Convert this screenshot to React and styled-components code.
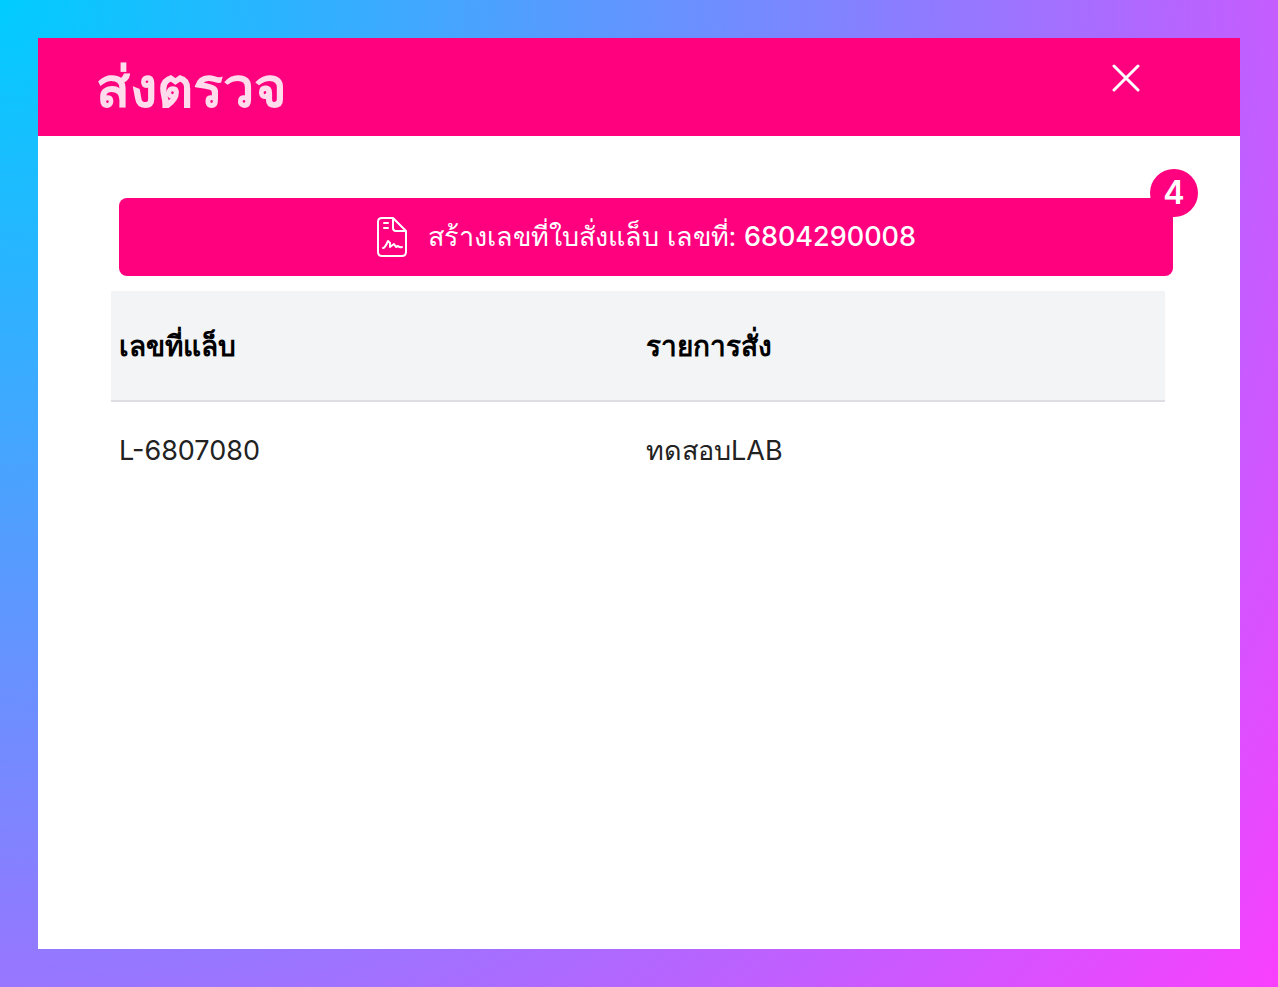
import React from 'react';
import styled, { createGlobalStyle } from 'styled-components';

const Global = createGlobalStyle`
  *, *::before, *::after { box-sizing: border-box; }
  body { margin: 0; font-family: Inter, "Noto Sans", sans-serif; }
`;
const Backdrop = styled.div`
  min-height: 100vh;
  padding: 38px;
  display: flex;
  background: radial-gradient(circle farthest-corner at top left, #00ccff 0%, #f93fff 100%);
`;
const Dialog = styled.main`
  flex: 1;
  display: flex;
  flex-direction: column;
  background: #fff;
`;
const Header = styled.header`
  height: 98px;
  padding: 0 100px 0 58px;
  display: flex;
  align-items: center;
  justify-content: space-between;
  background: #ff007f;
`;
const Title = styled.h1`
  margin: 0;
  color: #ffdcec;
  font-size: 56px;
  line-height: 60px;
  font-weight: 600;
`;
const CloseButton = styled.button`
  width: 28px;
  height: 28px;
  padding: 0;
  margin-bottom: 18px;
  border: 0;
  background: none;
  color: #fff;
  svg { display: block; }
`;
const Body = styled.div`
  padding: 62px 75px 40px 73px;
`;
const ActionWrap = styled.div`
  position: relative;
  margin: 0 -8px 15px 8px;
`;
const ActionButton = styled.button`
  width: 100%;
  height: 78px;
  border: 0;
  border-radius: 8px;
  display: flex;
  align-items: center;
  justify-content: center;
  gap: 20px;
  background: #ff007f;
  color: #fff;
  font: 400 27px/36px Inter, "Noto Sans", sans-serif;
`;
const OrderNumber = styled.span`
  font-weight: 500;
`;
const Badge = styled.span`
  position: absolute;
  top: -29px;
  right: -25px;
  width: 48px;
  height: 48px;
  border-radius: 50%;
  display: grid;
  place-items: center;
  background: #ff007f;
  color: #fff;
  font: 600 32px/48px Inter, sans-serif;
`;
const Table = styled.table`
  width: 100%;
  border-collapse: collapse;
  table-layout: fixed;
  font-size: 27px;
  line-height: 36px;
  text-align: left;
`;
const HeadCell = styled.th`
  height: 110px;
  padding: 0 8px;
  background: #f3f4f6;
  border-bottom: 2px solid #dddfe2;
  color: #000;
  font-size: 28px;
  font-weight: 700;
`;
const Cell = styled.td`
  height: 98px;
  padding: 0 8px;
  color: #222;
`;

export default function App() {
  return (
    <>
      <Global />
      <Backdrop>
        <Dialog>
          <Header>
            <Title>ส่งตรวจ</Title>
            <CloseButton aria-label="ปิด">
              <svg width="28" height="28" viewBox="0 0 28 28" fill="none" stroke="currentColor" strokeWidth="3" strokeLinecap="round">
                <path d="M2 2 26 26M26 2 2 26" />
              </svg>
            </CloseButton>
          </Header>
          <Body>
            <ActionWrap>
              <ActionButton>
                <svg width="32" height="40" viewBox="0 0 32 40" fill="none" stroke="currentColor" strokeWidth="2" strokeLinecap="round" strokeLinejoin="round">
                  <path d="M17 1H6Q2 1 2 5V35Q2 39 6 39H26Q30 39 30 35V14L17 1V11Q17 14 20 14H30" />
                  <path d="M8 6H12M8 11H12" />
                  <path d="M7 31Q9 31 12 24L14 26V30L18 27L20 30L22 29Q24 31 26 30" />
                </svg>
                <span>สร้างเลขที่ใบสั่งแล็บ เลขที่: <OrderNumber>6804290008</OrderNumber></span>
              </ActionButton>
              <Badge>4</Badge>
            </ActionWrap>
            <Table>
              <thead><tr><HeadCell>เลขที่แล็บ</HeadCell><HeadCell>รายการสั่ง</HeadCell></tr></thead>
              <tbody><tr><Cell>L-6807080</Cell><Cell>ทดสอบLAB</Cell></tr></tbody>
            </Table>
          </Body>
        </Dialog>
      </Backdrop>
    </>
  );
}
